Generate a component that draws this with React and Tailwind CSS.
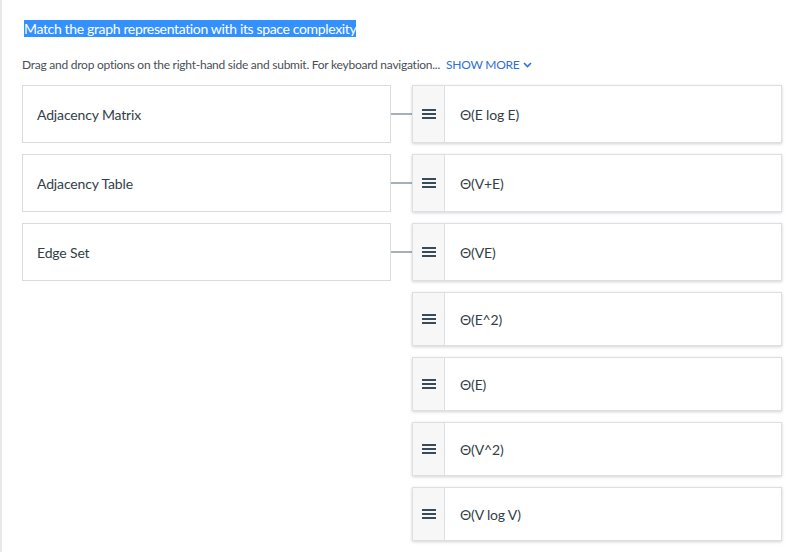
const font = { fontFamily: "Lato, 'Open Sans', sans-serif" };

const rows = [
  { left: "Adjacency Matrix", right: "Θ(E log E)" },
  { left: "Adjacency Table", right: "Θ(V+E)" },
  { left: "Edge Set", right: "Θ(VE)" },
  { left: null, right: "Θ(E^2)" },
  { left: null, right: "Θ(E)" },
  { left: null, right: "Θ(V^2)" },
  { left: null, right: "Θ(V log V)" },
];

const Handle = () => (
  <svg width="14" height="10" viewBox="0 0 14 10" fill="#394b59">
    <rect x="0" y="0" width="14" height="2" />
    <rect x="0" y="4" width="14" height="2" />
    <rect x="0" y="8" width="14" height="2" />
  </svg>
);

const Row = ({ left, right }) => {
  const h = left ? "h-[58px]" : "h-[54px]";
  return (
    <div className={`flex items-center ${h}`}>
      {left ? (
        <div className="w-[369px] h-full border border-[#d8dce0] bg-white flex items-center pl-[14px] text-[14px] text-[#333e48] tracking-[-0.15px]">
          {left}
        </div>
      ) : (
        <div className="w-[369px] h-full" />
      )}
      <div className="w-[21px] flex items-center">
        {left && <div className="w-full h-[2px] bg-[#a7b0b8]" />}
      </div>
      <div className="w-[370px] h-full flex border border-[#dcdfe3] bg-white shadow-[0_1px_3px_rgba(0,0,0,0.18)]">
        <div className="w-[32px] shrink-0 bg-[#f7f7f7] border-r border-[#dcdfe3] flex items-center justify-center">
          <Handle />
        </div>
        <div className="flex items-center pl-[15px] text-[14px] text-[#333e48] tracking-[-0.15px]">
          {right}
        </div>
      </div>
    </div>
  );
};

export default function App() {
  return (
    <div
      className="min-h-[552px] bg-white border-l-2 border-[#e9e9e9] pl-[20px] pt-[19px]"
      style={font}
    >
      <div className="pl-[2px] leading-[18px]">
        <span className="bg-[#3391ff] text-white text-[14px] tracking-[-0.35px]">
          Match the graph representation with its space complexity
        </span>
      </div>
      <div className="mt-[19px] flex items-center text-[12px] leading-[16px] tracking-[-0.25px]">
        <span className="text-[#4a4f55]">
          Drag and drop options on the right-hand side and submit. For keyboard navigation...
        </span>
        <button className="ml-[6px] flex items-center gap-[4px] text-[#2f6fd6] uppercase">
          Show more
          <svg width="9" height="6" viewBox="0 0 9 6" fill="none" stroke="#2f6fd6" strokeWidth="1.6">
            <path d="M1 1l3.5 3.5L8 1" />
          </svg>
        </button>
      </div>
      <div className="mt-[12px] flex flex-col gap-[11px] pb-[11px]">
        {rows.map((r, i) => (
          <Row key={i} left={r.left} right={r.right} />
        ))}
      </div>
    </div>
  );
}
